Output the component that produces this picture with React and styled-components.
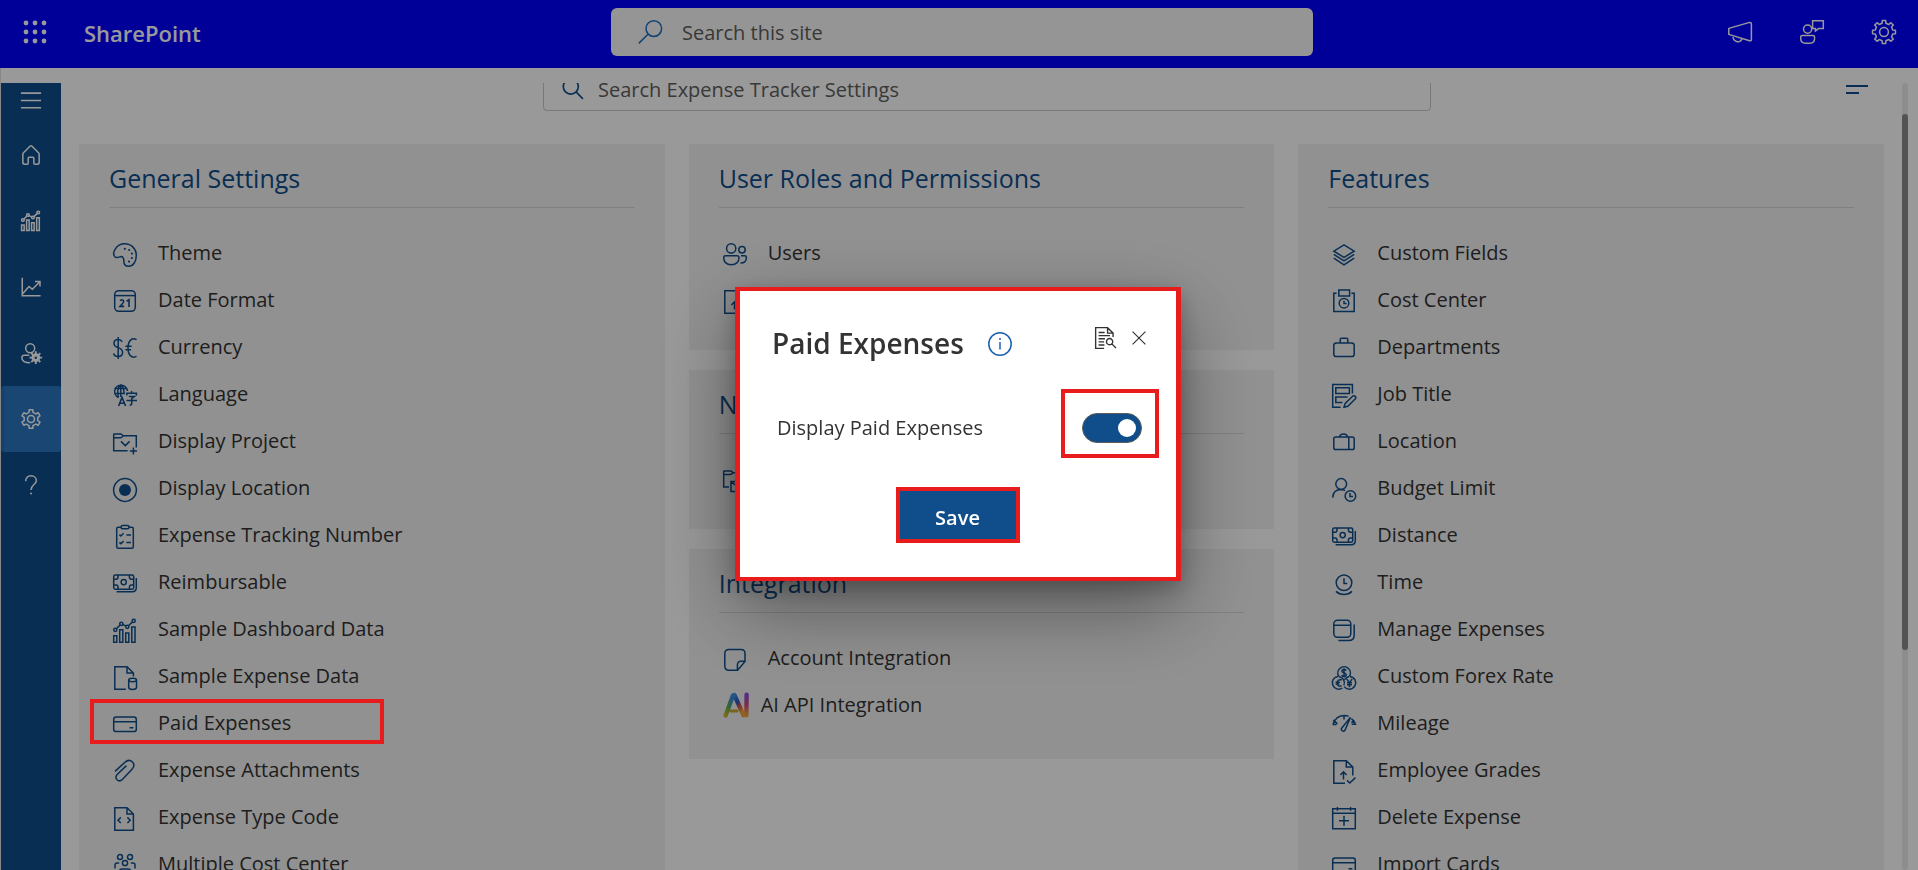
import React, { useLayoutEffect, useRef } from "react";
import styled, { createGlobalStyle } from "styled-components";

const brand = "#0f4e8b";
const mark = "#e81c1c";
const sans = '"Open Sans", "Noto Sans", "Liberation Sans", sans-serif';

const GlobalStyle = createGlobalStyle`
  * { box-sizing: border-box; }
  body { margin: 0; background: #fff; font-family: ${sans}; font-size: 20px; color: #333; }
  button, input { font: inherit; color: inherit; }
  button { border: 0; padding: 0; background: none; cursor: pointer; }
  ul { list-style: none; margin: 0; padding: 0; }
`;

/* ---------- icons ---------- */

const Svg = styled.svg`
  display: block;
  flex: none;
  overflow: visible;
  fill: none;
  stroke: currentColor;
  stroke-width: ${(p) => p.$weight || 1.5};
`;

function Icon({ size = 24, weight, children }) {
  return (
    <Svg width={size} height={size} viewBox="0 0 24 24" $weight={weight} aria-hidden="true">
      {children}
    </Svg>
  );
}

function gearPath(teeth, outer, inner) {
  const step = (Math.PI * 2) / teeth;
  const at = (r, a) => `${(12 + r * Math.sin(a)).toFixed(2)} ${(12 - r * Math.cos(a)).toFixed(2)}`;
  const points = [];
  for (let i = 0; i < teeth; i += 1) {
    const a = i * step;
    points.push(at(inner, a - step * 0.27), at(outer, a - step * 0.19));
    points.push(at(outer, a + step * 0.19), at(inner, a + step * 0.27));
  }
  return `M${points.join("L")}Z`;
}

const money = (
  <>
    <rect x="0.7" y="3" width="20" height="14.2" rx="1.6" />
    <circle cx="10.7" cy="10.1" r="2.6" />
    <path d="M.7 7.2H3Q5 7.2 5 5V3M.7 13H3Q5 13 5 15.2V17.2M20.7 7.2H18.4Q16.4 7.2 16.4 5V3M20.7 13H18.4Q16.4 13 16.4 15.2V17.2" />
    <path d="M23.3 6V15.6Q23.3 19.8 19.2 19.8H3.6" />
  </>
);
const card = (
  <>
    <rect x="0.7" y="4" width="22.6" height="14.6" rx="2.4" />
    <path d="M.7 8.8H23.3M16.6 14.8H20.4" />
  </>
);
const chart = (
  <>
    <circle cx="2.3" cy="10.8" r="1.6" />
    <circle cx="8.3" cy="4.8" r="1.6" />
    <circle cx="14.3" cy="7.8" r="1.6" />
    <circle cx="20.7" cy="1.8" r="1.6" />
    <path d="M3.4 9.7L7.2 5.9M9.7 5.5L12.9 7.1M15.4 6.7L19.6 2.9" />
    <path d="M.7 16.8H3.8V23.3H.7ZM6.7 10.8H9.8V23.3H6.7ZM12.7 14H15.8V23.3H12.7ZM18.8 8H22V23.3H18.8Z" />
  </>
);
const gradeFile = (
  <>
    <path d="M13 23.3H1.8V.7H14.3L20.8 7V15.5M14.3 .7V7H20.8" />
    <path d="M11.5 19.5V12M8.4 15L11.5 11.8L14.6 15M15 20.4L17.8 23L23.4 17.6" />
  </>
);

const icons = {
  palette: (
    <>
      <path d="M1.7 13.6C.2 11.6 .7 8.4 2.2 6.1C4.3 2.5 7.9 .7 11.8 .7C18.4 .7 23.3 5.9 23.3 12.6C23.3 18.9 20 23.3 15.7 23.3C12.5 23.3 10.9 21.2 10.9 18.2C10.9 14.8 9.4 13 7.3 13.7C4.9 14.6 3.1 15.5 1.7 13.6Z" />
      <g fill="currentColor" stroke="none">
        <circle cx="11.8" cy="5.8" r="1.1" /><circle cx="16.2" cy="7" r="1.1" /><circle cx="18.9" cy="10.6" r="1.1" />
        <circle cx="18.9" cy="15" r="1.1" /><circle cx="16" cy="18.6" r="1.1" />
      </g>
    </>
  ),
  date: (
    <>
      <rect x="1.7" y="0.7" width="20.6" height="20.6" rx="4" />
      <path d="M1.7 5.6H22.3" />
      <path strokeWidth="1.6" d="M7.3 11Q7.6 9.7 9 9.7Q10.7 9.8 10.7 11.3Q10.6 12.6 7.1 16.4H11.2M13.6 11.3L16 9.8V17" />
    </>
  ),
  currency: (
    <>
      <path d="M9.2 4.8C8.3 3.1 7 2.5 5.2 2.5C2.6 2.5 1 4 1 6.4C1 11.8 9.6 9.4 9.6 15.2C9.6 17.9 7.8 19.4 5.2 19.4C2.8 19.4 1.2 18.4 .5 16.4M5.2 0V22" />
      <path d="M23.6 2.6C19 .3 15 3.4 15 11C15 18.6 19 21.6 23.6 19.4M12.4 9.3H18.6M12.4 12.7H18" />
    </>
  ),
  language: (
    <>
      <path d="M5.5 13.5A6.4 6.4 0 1 1 14.4 7M7.8 .8V13M1.4 4.6H14M1.2 9.4H12M5.6 13.4C4 9 4.4 3.4 7.8 .8C10.4 3 11.2 6 10.8 9.4" />
      <path d="M5.6 22L9 13.4L12.6 22M6.8 19.2H11.5" strokeWidth="1.6" />
      <path d="M18.6 7V9M13.8 11.6V9.2H23.4V11.6M15.8 12.4H21.4L18.7 14.6V19.8Q18.7 21.2 16.6 20.9M13.4 16.4H24" />
    </>
  ),
  project: (
    <>
      <path d="M14.6 19.8H.7V3.6Q.7 3 1.3 3H8L10.2 4.8H23.3V16.5M.7 6.7H7.4Q9 6.6 10.2 4.8" />
      <path d="M8 10.4L12.3 14.6L16.6 10.4M20.4 16.4V23.6M16.8 20H24" />
    </>
  ),
  radio: (
    <>
      <circle cx="12" cy="12" r="11.4" />
      <circle cx="12" cy="12" r="6" fill="currentColor" stroke="none" />
    </>
  ),
  checklist: (
    <>
      <path d="M8 2.2H5.2Q3.7 2.2 3.7 3.7V21.8Q3.7 23.3 5.2 23.3H18.8Q20.3 23.3 20.3 21.8V3.7Q20.3 2.2 18.8 2.2H16" />
      <rect x="8" y="0.6" width="8" height="3.2" rx="1.5" />
      <path d="M6.4 9.6L7.9 11L10.6 8.3M13.4 10H18M6.4 17.4L7.9 18.8L10.6 16.1M13.4 17.6H18" />
    </>
  ),
  money,
  chart,
  fileData: (
    <>
      <path d="M12.8 23.3H1.8V.7H14L20.4 7V10.4M14 .7V7H20.4" />
      <ellipse cx="19.6" cy="14" rx="3.9" ry="1.7" />
      <path d="M15.7 14V21.6C15.7 24 23.5 24 23.5 21.6V14" />
    </>
  ),
  card,
  clip: (
    <path d="M2 11.4L12 2.2C14.6 -.1 17.4 .1 19.4 2C21.4 4 21.2 6.8 19 9.2L9.6 19.2C7.8 21 5.4 21.2 4 19.8C2.4 18.2 2.6 16 4.4 14.2L13.4 5.6" />
  ),
  code: (
    <>
      <path d="M1.8 .7H14L20.4 7V23.3H1.8ZM14 .7V7H20.4" />
      <path d="M7.8 10.4L5 13.2L7.8 16M14.4 10.4L17.2 13.2L14.4 16" />
    </>
  ),
  group: (
    <>
      <circle cx="7" cy="3" r="2.5" /><circle cx="17" cy="3" r="2.5" /><circle cx="12" cy="9" r="2.6" />
      <path d="M2 14.4V11Q2 9 4.2 9H6.2M22 14.4V11Q22 9 19.8 9H17.8M6.4 22V17.4Q6.4 15 8.8 15H15.2Q17.6 15 17.6 17.4V22" />
    </>
  ),
  users: (
    <>
      <circle cx="8.2" cy="5.4" r="4.6" /><circle cx="19" cy="6.8" r="3.2" />
      <path d="M2.4 12.8H14.2Q16 12.8 16 14.6C16 19 13 21.8 8.3 21.8C3.6 21.8 .7 19 .7 14.6Q.7 12.8 2.4 12.8ZM18 12.8H21.8Q23.4 12.8 23.4 14.4C23.4 17.8 21.4 20 17.4 20" />
    </>
  ),
  gradeFile,
  mailFolder: (
    <>
      <path d="M6 18H.7V2.6Q.7 2 1.3 2H8L10.2 3.8H23.3V10M.7 5.4H7.4Q9 5.2 10.2 3.8" />
      <path d="M8 12.6H23.3V22.4H8ZM8 12.6L15.6 18.6L23.3 12.6" />
    </>
  ),
  note: (
    <path d="M6 1.6H18Q22 1.6 22 5.6V13.4L14.6 22.2H6Q1.8 22.2 1.8 18V5.8Q1.8 1.6 6 1.6ZM14.4 22V17.4Q14.4 13.2 18 13.2H22" />
  ),
  layers: (
    <path d="M12 1.8L22.2 8.2L12 14.4L1.8 8.2ZM1.8 11.4L12 17.8L22.2 11.4M1.8 15.2L12 21.8L22.2 15.2" />
  ),
  costCenter: (
    <>
      <path d="M4.6 3.2H1.8V21.4H22.2V3.2H19.4M6.8 0H17.6V6H6.8Z" />
      <circle cx="12" cy="13.2" r="4.8" />
      <path d="M12 10.8V13.6H14.6" />
    </>
  ),
  briefcase: (
    <>
      <rect x="1.8" y="6" width="20.4" height="13.6" rx="2.6" />
      <path d="M8.2 6V2.6Q8.2 1.2 9.6 1.2H14.4Q15.8 1.2 15.8 2.6V6" />
    </>
  ),
  jobTitle: (
    <>
      <path d="M8.6 23.2H.7V.6H20.4V9.4M3.8 3.8H17.4V9.4H3.8ZM15.6 13H3.8V18.6H10.4" />
      <path d="M12 23.2L13.2 19.4L20.6 12.2C22.2 10.8 25 13.2 23.4 14.8L15.8 22.2Z" />
    </>
  ),
  suitcase: (
    <>
      <rect x="1.8" y="6" width="20.4" height="12.6" rx="1.8" />
      <path d="M7.8 6C7.8 2 15.2 2 15.2 6M16.8 6V18.6" />
    </>
  ),
  budget: (
    <>
      <circle cx="9.2" cy="6" r="5.4" />
      <circle cx="18.4" cy="18" r="5.3" />
      <path d="M.7 19.6C.9 14.6 4 11.4 9.4 11.4Q11.6 11.6 13 12.6M18 15V18.5H21" />
    </>
  ),
  time: (
    <>
      <circle cx="12" cy="10.8" r="7.8" />
      <path d="M12 6.2V11.6H15.2M4 19.4C8 23.4 16 23.4 20 19.4" />
    </>
  ),
  windows: (
    <>
      <rect x="1.8" y="1.2" width="17" height="17" rx="3.6" />
      <path d="M1.8 6.2H18.8M22.2 5.4V16Q22.2 21.6 16.6 21.6H6.4" />
    </>
  ),
  forex: (
    <>
      <path d="M6.8 10.4A6.3 6.3 0 1 1 17.4 10.4M10.4 22A6.4 6.4 0 1 1 6 10.4M18 10.4A6.4 6.4 0 1 1 12.2 20.6" />
      <path d="M11.8 19.4A6.4 6.4 0 0 0 6.8 10.4M17.2 10.4Q14 11 12.6 13.6" />
      <path strokeWidth="1.5" d="M14.2 4.6C13.4 3 9.8 3.2 9.9 5.2C10 7.2 14.2 6.4 14.2 8.8C14.1 11 10.2 10.8 9.7 9M12 2.2V11.6" />
      <path d="M9.8 14C6.6 12.8 5.2 15 5.2 17C5.2 19.4 7 21 9.6 19.8M3.6 16.2H8M3.6 18H7.4M14.6 13L17.4 16.6L20.2 13M17.4 16.6V21.2M15 16.8H20M15 18.8H20" />
    </>
  ),
  mileage: (
    <>
      <path d="M1 11.2C2.8 6 7 2.6 12.6 2.6Q14.8 2.6 16.6 3.4M.6 11.4H4.6M1.2 7L5.4 10.6M12 2.6V6.4M19.4 5.6Q22.2 8 23.4 11.2H19.6M22.4 7.4L19.4 9.6" />
      <path d="M18.4 4.4L9.6 15.2C8.4 17.2 11.6 19.6 13 17.2Z" />
    </>
  ),
  calendarPlus: (
    <path d="M.7 1.8H23.3V21.8H.7ZM.7 6.2H23.3M5.4 0V3.8M18.6 0V3.8M12 8.8V18.8M7 13.8H17" />
  ),
  menu: <path d="M1 4.5H23M1 12.5H23M1 20.5H23" />,
  home: (
    <path d="M2.2 11.2Q2.2 10.2 3 9.4L10.8 1.5Q12 .5 13.2 1.5L21 9.4Q21.8 10.2 21.8 11.2V20.8Q21.8 23 19.6 23H16.6Q15.4 23 15.4 21.8V16Q15.4 14.8 14.2 14.8H9.8Q8.6 14.8 8.6 16V21.8Q8.6 23 7.4 23H4.4Q2.2 23 2.2 20.8Z" />
  ),
  trend: (
    <path d="M1.5 1V22.5H23.5M2 20L9.6 11.4L13.6 14.8L22.6 5.6M16.8 5.4H22.8V11.4" />
  ),
  personGear: (
    <>
      <circle cx="11" cy="6.4" r="5.4" />
      <path d="M10 14.8H3.8Q1 14.8 1 17.6C1 21.4 4.4 23.6 11 23.6" />
      <path fill="currentColor" fillRule="evenodd" stroke="none" transform="translate(9.6 9.4) scale(.68)" d={`${gearPath(8, 11.4, 7.8)}M12 9.8A2.2 2.2 0 1 0 12 14.2A2.2 2.2 0 1 0 12 9.8Z`} />
    </>
  ),
  gearSix: (
    <>
      <path strokeLinejoin="round" d={gearPath(6, 11.4, 8.4)} />
      <circle cx="12" cy="12" r="4.2" />
    </>
  ),
  help: (
    <>
      <path d="M5.6 7.4C5.6 3.4 8.2 1 12 1C15.8 1 18.4 3.4 18.4 6.8C18.4 11.4 12 11.8 12 18" />
      <circle cx="12" cy="22.2" r="1.2" fill="currentColor" stroke="none" />
    </>
  ),
  megaphone: (
    <path strokeLinejoin="round" d="M.8 8.4L21.6 2.4Q23.4 2.2 23.4 4V19.4Q23.4 21 21.6 20.7L.8 14.4ZM4.8 15.8C5 23 13.4 23.4 13.8 18.4" />
  ),
  feedback: (
    <path d="M7.6 5A4.1 4.1 0 1 0 7.6 13.2A4.1 4.1 0 1 0 7.6 5ZM2.2 15.6H13Q14.6 15.6 14.6 17.2V18.6Q14.6 23.3 9.8 23.3H5.4Q.7 23.3 .7 18.6V17.2Q.7 15.6 2.2 15.6ZM12.6 .7H23.3V8.6H18.6L15.4 11V8.6H12.6Z" />
  ),
  gearEight: (
    <>
      <path strokeLinejoin="round" d={gearPath(8, 11.6, 9)} />
      <circle cx="12" cy="12" r="4.4" />
    </>
  ),
  waffle: (
    <g fill="currentColor" stroke="none">
      {[3, 12, 21].map((y) => [3, 12, 21].map((x) => <circle key={`${x}-${y}`} cx={x} cy={y} r="2.4" />))}
    </g>
  ),
  searchSite: <path d="M15.8 .8A7.8 7.8 0 1 0 15.8 16.4A7.8 7.8 0 1 0 15.8 .8ZM10.2 14L.8 23.4" />,
  search: <path d="M9.6 1.2A8.2 8.2 0 1 0 9.6 17.6A8.2 8.2 0 1 0 9.6 1.2ZM15.4 15.2L22.8 22.8" />,
  info: (
    <>
      <circle cx="12" cy="12" r="11.2" />
      <path d="M12 10V17.6" />
      <circle cx="12" cy="7" r="1" fill="currentColor" stroke="none" />
    </>
  ),
  auditDoc: (
    <path d="M11 23.3H1.8V.7H14.8L20.8 6.7V11M14.8 .7V6.7H20.8M5 9.4H17.4M5 6H11.6M5 12.8H12M5 16.2H11M5 19.6H11.4M17 12.6A3.4 3.4 0 1 0 17 19.4A3.4 3.4 0 1 0 17 12.6ZM19.4 18.4L24 23" />
  ),
  close: <path d="M1 1L23 23M23 1L1 23" />,
};

function AiLogo() {
  return (
    <Svg width="26" height="26" viewBox="0 0 26 26" aria-hidden="true">
      <defs>
        <linearGradient id="ai-left" x1="0" y1="1" x2="0.6" y2="0">
          <stop offset="0" stopColor="#c9b52c" /><stop offset=".45" stopColor="#58ae4c" /><stop offset="1" stopColor="#3b8be0" />
        </linearGradient>
        <linearGradient id="ai-mid" x1="0" y1="0" x2="0.4" y2="1">
          <stop offset="0" stopColor="#3f93e0" /><stop offset=".4" stopColor="#2754c4" /><stop offset=".7" stopColor="#d8573c" /><stop offset="1" stopColor="#eda23c" />
        </linearGradient>
        <linearGradient id="ai-right" x1="0" y1="0" x2="0" y2="1">
          <stop offset="0" stopColor="#8a4be0" /><stop offset=".5" stopColor="#d14a7c" /><stop offset="1" stopColor="#efa63a" />
        </linearGradient>
      </defs>
      <g fill="none" strokeLinecap="round" strokeLinejoin="round" strokeWidth="4.4">
        <path stroke="url(#ai-right)" d="M23.6 2.6L23.4 23.2" />
        <path stroke="#c9a52f" strokeWidth="3" d="M8 19H14" />
        <path stroke="url(#ai-left)" d="M2.6 23.4L10 3.4" />
        <path stroke="url(#ai-mid)" d="M11.4 3L20.4 23.2" />
      </g>
    </Svg>
  );
}

/* ---------- top bar ---------- */

const Shell = styled.div`
  display: flex;
  flex-direction: column;
  height: 100vh;
  overflow: hidden;
`;

const TopBar = styled.header`
  flex: none;
  display: grid;
  grid-template-columns: 1fr minmax(0, 702px) 1fr;
  align-items: center;
  height: 68px;
  padding: 0 17px 4px 23px;
  background: #00f;
  color: #fff;
`;

const Brand = styled.div`
  display: flex;
  align-items: center;
  gap: 37px;
`;

const BrandName = styled.a`
  color: inherit;
  text-decoration: none;
  font-size: 22px;
  line-height: 30px;
  font-weight: 600;
  padding-top: 2px;
`;

const SiteSearch = styled.label`
  display: flex;
  align-items: center;
  gap: 20px;
  height: 48px;
  padding: 0 27px;
  border-radius: 6px;
  background: #f8f8f8;
  color: #1b6ec2;
`;

const SearchInput = styled.input`
  flex: 1;
  min-width: 0;
  height: 32px;
  border: 0;
  padding: 0;
  background: transparent;
  outline: none;
  color: #605e5c;
  &::placeholder { color: #605e5c; opacity: 1; }
`;

const Actions = styled.div`
  display: flex;
  justify-content: flex-end;
  gap: 48px;
  padding-right: 5px;
`;

const IconButton = styled.button`
  display: block;
  flex: none;
`;

/* ---------- body ---------- */

const Body = styled.div`
  flex: 1;
  min-height: 0;
  display: flex;
  padding-top: 15px;
  border-left: 1px solid #e1e1e1;
`;

const Rail = styled.nav`
  flex: none;
  width: 60px;
  display: flex;
  flex-direction: column;
  background: ${brand};
  color: #fff;
`;

const MenuButton = styled.button`
  display: grid;
  place-items: center;
  height: 33px;
  margin-bottom: 6px;
`;

const RailButton = styled.button`
  display: grid;
  place-items: center;
  height: 66px;
  border-radius: 3px;
  background: ${(p) => (p.$active ? "#2b75be" : "transparent")};
  border-left: 3px solid ${(p) => (p.$active ? "#226db5" : "transparent")};
  border-right: 3px solid transparent;
`;

const Main = styled.main`
  flex: 1;
  min-width: 0;
  overflow: hidden;
  padding: 0 18px 40px;
`;

const Toolbar = styled.div`
  display: grid;
  grid-template-columns: 1fr minmax(0, 888px) 1fr;
  align-items: center;
  padding: 0 16px 0 27px;
  margin-bottom: 33px;
`;

const SettingsSearch = styled.label`
  grid-column: 2;
  display: flex;
  align-items: center;
  gap: 14px;
  height: 44px;
  padding: 0 18px;
  border: 1px solid #c8c8c8;
  border-radius: 4px;
  color: ${brand};
`;

const FilterButton = styled.button`
  justify-self: end;
  display: grid;
  gap: 5px;
  width: 22px;
`;

const FilterLine = styled.span`
  height: 2px;
  width: ${(p) => (p.$short ? "13px" : "22px")};
  background: ${brand};
`;

const Columns = styled.div`
  display: grid;
  grid-template-columns: repeat(3, minmax(0, 1fr));
  gap: 24px;
  align-items: start;
`;

const Column = styled.div`
  display: grid;
  gap: 20px;
`;

const Card = styled.section`
  padding: 16px 30px 27px;
  background: #f2f2f2;
`;

const CardTitle = styled.h2`
  margin: 0 0 21px;
  padding-bottom: 11px;
  border-bottom: 1px solid #d6d6d6;
  font-size: 25px;
  line-height: 36px;
  font-weight: 400;
  color: ${brand};
`;

const Item = styled.li`
  position: relative;
  height: ${(p) => (p.$logo ? "51px" : "47px")};
`;

const ItemButton = styled.button`
  display: flex;
  align-items: center;
  gap: ${(p) => (p.$logo ? "12px" : "21px")};
  height: 47px;
  padding-left: 4px;
  line-height: 28px;
`;

const ItemIcon = styled.span`
  color: ${brand};
  padding-top: ${(p) => (p.$logo ? "0" : "4px")};
`;

const ItemMark = styled.span`
  position: absolute;
  z-index: 20;
  top: 0;
  left: -19px;
  width: 294px;
  height: 45px;
  border: 4px solid ${mark};
  pointer-events: none;
`;

const ScrollTrack = styled.div`
  flex: none;
  width: 6px;
  margin-right: 10px;
  border-radius: 3px;
  background: #ececec;
`;

const ScrollSpacer = styled.div`
  height: 4%;
`;

const ScrollThumb = styled.div`
  height: 68%;
  border-radius: 3px;
  background: #8a8a8a;
`;

/* ---------- dialog ---------- */

const Overlay = styled.div`
  position: fixed;
  inset: 0;
  z-index: 10;
  display: grid;
  place-items: center;
  padding: 0 2px 2px 0;
  background: rgba(0, 0, 0, 0.4);
`;

const Dialog = styled.section`
  width: 446px;
  padding: 36px 17px 34px 32px;
  border: solid ${mark};
  border-width: 4px 5px;
  background: #fff;
  box-shadow: 0 28px 72px rgba(0, 0, 0, 0.4), 0 6px 20px rgba(0, 0, 0, 0.24);
`;

const DialogHead = styled.div`
  display: flex;
  align-items: flex-start;
  height: 38px;
  padding-right: 13px;
`;

const DialogTitle = styled.h1`
  margin: -4px 0 0;
  font-size: 28px;
  line-height: 40px;
  font-weight: 600;
`;

const InfoButton = styled(IconButton)`
  color: #1a5fae;
  margin: 5px 0 0 24px;
`;

const DialogTools = styled.div`
  display: flex;
  align-items: center;
  gap: 16px;
  margin-left: auto;
`;

const ToggleRow = styled.label`
  display: flex;
  align-items: center;
  justify-content: space-between;
  margin: 24px 0 29px;
  padding-left: 5px;
  font-weight: 500;
`;

const ToggleText = styled.span`
  padding-top: 8px;
`;

const ToggleMark = styled.span`
  display: grid;
  place-items: center;
  width: 98px;
  height: 69px;
  padding-left: 4px;
  padding-top: 8px;
  border: 4px solid ${mark};
`;

const Switch = styled.input`
  appearance: none;
  display: flex;
  align-items: center;
  justify-content: flex-start;
  width: 60px;
  height: 30px;
  margin: 0;
  padding: 0 5px;
  border: 1px solid #605e5c;
  border-radius: 15px;
  background: #fff;
  cursor: pointer;
  &::before { content: ""; width: 18px; height: 18px; border-radius: 50%; background: #605e5c; }
  &:checked { justify-content: flex-end; background: ${brand}; }
  &:checked::before { background: #fff; }
`;

const SaveButton = styled.button`
  display: block;
  width: 124px;
  height: 56px;
  margin: 0 auto;
  padding-top: 6px;
  border: 4px solid ${mark};
  background: ${brand};
  color: #fff;
  font-size: 20px;
  line-height: 28px;
  font-weight: 600;
`;

const DialogActions = styled.div`
  padding-right: 16px;
`;

/* ---------- content ---------- */

const general = [
  ["palette", "Theme"], ["date", "Date Format"], ["currency", "Currency"], ["language", "Language"],
  ["project", "Display Project"], ["radio", "Display Location"], ["checklist", "Expense Tracking Number"],
  ["money", "Reimbursable"], ["chart", "Sample Dashboard Data"], ["fileData", "Sample Expense Data"],
  ["card", "Paid Expenses", true], ["clip", "Expense Attachments"], ["code", "Expense Type Code"],
  ["group", "Multiple Cost Center"],
];
const roles = [["users", "Users"], ["gradeFile", ""]];
const notifications = [["mailFolder", ""]];
const integration = [["note", "Account Integration"], ["ai", "AI API Integration"]];
const features = [
  ["layers", "Custom Fields"], ["costCenter", "Cost Center"], ["briefcase", "Departments"],
  ["jobTitle", "Job Title"], ["suitcase", "Location"], ["budget", "Budget Limit"], ["money", "Distance"],
  ["time", "Time"], ["windows", "Manage Expenses"], ["forex", "Custom Forex Rate"], ["mileage", "Mileage"],
  ["gradeFile", "Employee Grades"], ["calendarPlus", "Delete Expense"], ["card", "Import Cards"],
];
const rail = [
  ["home", "Home"], ["chart", "Dashboard"], ["trend", "Reports"],
  ["personGear", "Approvers"], ["gearSix", "Settings"], ["help", "Help"],
];

function SettingsCard({ title, items }) {
  return (
    <Card>
      <CardTitle>{title}</CardTitle>
      <ul>
        {items.map(([icon, label, marked]) => {
          const logo = icon === "ai";
          return (
            <Item key={icon + label} $logo={logo}>
              <ItemButton type="button" $logo={logo}>
                <ItemIcon $logo={logo}>{logo ? <AiLogo /> : <Icon>{icons[icon]}</Icon>}</ItemIcon>
                {label}
              </ItemButton>
              {marked && <ItemMark />}
            </Item>
          );
        })}
      </ul>
    </Card>
  );
}

function PaidExpensesDialog() {
  return (
    <Overlay>
      <Dialog role="dialog" aria-modal="true" aria-labelledby="dialog-title">
        <DialogHead>
          <DialogTitle id="dialog-title">Paid Expenses</DialogTitle>
          <InfoButton type="button" aria-label="Information"><Icon>{icons.info}</Icon></InfoButton>
          <DialogTools>
            <IconButton type="button" aria-label="Audit log"><Icon size={22}>{icons.auditDoc}</Icon></IconButton>
            <IconButton type="button" aria-label="Close"><Icon size={14} weight={2}>{icons.close}</Icon></IconButton>
          </DialogTools>
        </DialogHead>
        <ToggleRow>
          <ToggleText>Display Paid Expenses</ToggleText>
          <ToggleMark><Switch type="checkbox" role="switch" defaultChecked /></ToggleMark>
        </ToggleRow>
        <DialogActions>
          <SaveButton type="button">Save</SaveButton>
        </DialogActions>
      </Dialog>
    </Overlay>
  );
}

export default function App() {
  const main = useRef(null);
  useLayoutEffect(() => {
    main.current.scrollTop = 16;
  }, []);

  return (
    <>
      <GlobalStyle />
      <Shell>
        <TopBar>
          <Brand>
            <IconButton type="button" aria-label="App launcher"><Icon>{icons.waffle}</Icon></IconButton>
            <BrandName href="#">SharePoint</BrandName>
          </Brand>
          <SiteSearch>
            <Icon>{icons.searchSite}</Icon>
            <SearchInput type="search" placeholder="Search this site" aria-label="Search this site" />
          </SiteSearch>
          <Actions>
            <IconButton type="button" aria-label="Announcements"><Icon>{icons.megaphone}</Icon></IconButton>
            <IconButton type="button" aria-label="Feedback"><Icon>{icons.feedback}</Icon></IconButton>
            <IconButton type="button" aria-label="Site settings"><Icon>{icons.gearEight}</Icon></IconButton>
          </Actions>
        </TopBar>
        <Body>
          <Rail aria-label="Expense tracker">
            <MenuButton type="button" aria-label="Menu"><Icon size={22} weight={1.8}>{icons.menu}</Icon></MenuButton>
            {rail.map(([icon, label]) => (
              <RailButton key={icon} type="button" aria-label={label} $active={icon === "gearSix"}>
                <Icon size={20} weight={1.8}>{icons[icon]}</Icon>
              </RailButton>
            ))}
          </Rail>
          <Main ref={main}>
            <Toolbar>
              <SettingsSearch>
                <Icon size={22} weight={1.8}>{icons.search}</Icon>
                <SearchInput type="search" placeholder="Search Expense Tracker Settings" aria-label="Search Expense Tracker Settings" />
              </SettingsSearch>
              <FilterButton type="button" aria-label="Filter">
                <FilterLine />
                <FilterLine $short />
              </FilterButton>
            </Toolbar>
            <Columns>
              <SettingsCard title="General Settings" items={general} />
              <Column>
                <SettingsCard title="User Roles and Permissions" items={roles} />
                <SettingsCard title="Notifications" items={notifications} />
                <SettingsCard title="Integration" items={integration} />
              </Column>
              <SettingsCard title="Features" items={features} />
            </Columns>
          </Main>
          <ScrollTrack>
            <ScrollSpacer />
            <ScrollThumb />
          </ScrollTrack>
        </Body>
      </Shell>
      <PaidExpensesDialog />
    </>
  );
}
